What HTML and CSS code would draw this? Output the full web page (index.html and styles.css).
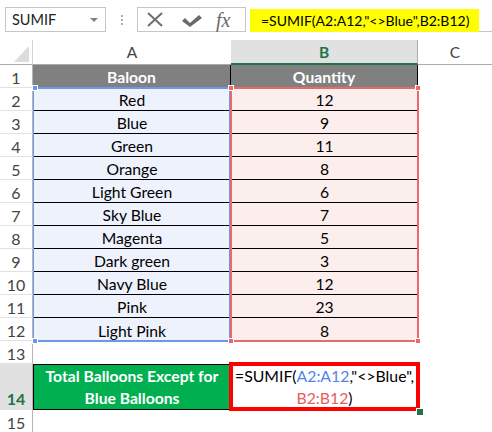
FILE: index.html
```html
<!DOCTYPE html>
<html>
<head>
<meta charset="utf-8">
<link rel="stylesheet" href="styles.css">
</head>
<body>
<div class="toolbar">
  <div class="namebox"><span>SUMIF</span><span class="caret"></span></div>
  <div class="grip"><i></i><i></i><i></i></div>
  <div class="fbtns">
    <svg class="ic-x" width="18" height="15" viewBox="0 0 18 15"><path d="M2 1 L16 14 M16 1 L2 14" stroke="#6f6f6f" stroke-width="2" fill="none"/></svg>
    <svg class="ic-check" width="22" height="14" viewBox="0 0 22 14"><polygon points="1,7 4,4 9,9 18,1 21,4 9,13" fill="#6a6a6a"/></svg>
    <span class="fx">fx</span>
  </div>
  <div class="fbar"><span class="formula">=SUMIF(A2:A12,"&lt;&gt;Blue",B2:B12)</span></div>
</div>
<div class="sheet">
  <div class="corner"><span class="tri"></span></div><div class="ch">A</div><div class="ch sel">B</div><div class="ch last">C</div>

  <div class="rh">1</div><div class="c hd">Baloon</div><div class="c hd">Quantity</div><div class="c"></div>
  <div class="rh">2</div><div class="c a">Red</div><div class="c b">12</div><div class="c"></div>
  <div class="rh">3</div><div class="c a">Blue</div><div class="c b">9</div><div class="c"></div>
  <div class="rh">4</div><div class="c a">Green</div><div class="c b">11</div><div class="c"></div>
  <div class="rh">5</div><div class="c a">Orange</div><div class="c b">8</div><div class="c"></div>
  <div class="rh">6</div><div class="c a">Light Green</div><div class="c b">6</div><div class="c"></div>
  <div class="rh">7</div><div class="c a">Sky Blue</div><div class="c b">7</div><div class="c"></div>
  <div class="rh">8</div><div class="c a">Magenta</div><div class="c b">5</div><div class="c"></div>
  <div class="rh">9</div><div class="c a">Dark green</div><div class="c b">3</div><div class="c"></div>
  <div class="rh">10</div><div class="c a">Navy Blue</div><div class="c b">12</div><div class="c"></div>
  <div class="rh">11</div><div class="c a">Pink</div><div class="c b">23</div><div class="c"></div>
  <div class="rh">12</div><div class="c a end">Light Pink</div><div class="c b end">8</div><div class="c"></div>
  <div class="rh">13</div><div class="c"></div><div class="c"></div><div class="c"></div>
  <div class="rh sel">14</div><div class="c total"><span>Total Balloons Except for</span><span>Blue Balloons</span></div><div class="c result"><span>=SUMIF(<b class="ra">A2:A12</b>,"&lt;&gt;Blue",</span><span><b class="rb">B2:B12</b>)</span></div><div class="c"></div>
  <div class="rh">15</div><div class="c"></div><div class="c"></div><div class="c"></div>

  <div class="range range-a"></div>
  <div class="range range-b"></div>
  <div class="hdl blue h-a-tl"></div>
  <div class="hdl blue h-a-bl"></div>
  <div class="hdl red h-b-tl"></div>
  <div class="hdl red h-b-tr"></div>
  <div class="hdl red h-b-bl"></div>
  <div class="hdl red h-b-br"></div>
  <div class="fill-handle"></div>
</div>
</body>
</html>
```
FILE: styles.css
```css
body {
  margin: 0;
  background: #fff;
  font-family: Lato, "Liberation Sans", sans-serif;
  overflow: hidden;
}
.toolbar {
  height: 40px;
  box-sizing: border-box;
  padding-top: 7px;
  display: flex;
  align-items: flex-start;
}
.namebox {
  margin-left: 5px;
  width: 101px;
  height: 25px;
  box-sizing: border-box;
  border: 1px solid #c6c6c6;
  display: flex;
  align-items: center;
  justify-content: space-between;
  padding: 0 7px 0 6px;
  font-size: 14.5px;
  color: #222;
}
.caret {
  width: 0;
  height: 0;
  border-left: 4px solid transparent;
  border-right: 4px solid transparent;
  border-top: 4px solid #808080;
}
.grip {
  margin-left: 15px;
  height: 25px;
  box-sizing: border-box;
  padding-top: 8px;
  display: flex;
  flex-direction: column;
  gap: 2px;
}
.grip i {
  display: block;
  width: 2px;
  height: 2px;
  background: #b0b0b0;
}
.fbtns {
  margin-left: 14px;
  width: 109px;
  height: 25px;
  box-sizing: border-box;
  border: 1px solid #c6c6c6;
  display: flex;
  align-items: center;
}
.ic-x { margin-left: 8px; }
.ic-check { margin-left: 17px; margin-top: 2px; }
.fx {
  margin-left: 13px;
  font-family: "Liberation Serif", serif;
  font-style: italic;
  font-size: 20px;
  color: #6a6a6a;
  line-height: 20px;
}
.fbar {
  margin-left: 4px;
  flex: 1;
  height: 25px;
  box-sizing: border-box;
  border-bottom: 1px solid #c6c6c6;
  padding-top: 2px;
}
.formula {
  display: inline-block;
  height: 23px;
  box-sizing: border-box;
  background: #ffff00;
  padding: 0 10px 0 11px;
  font-size: 14px;
  line-height: 23px;
  color: #000;
  white-space: nowrap;
}
.sheet {
  position: relative;
  display: grid;
  grid-template-columns: 33px 198px 187px 1fr;
  grid-template-rows: 25px repeat(13, 23px) 46px 23px;
}
.corner {
  position: relative;
  border-right: 1px solid #d4d4d4;
  border-bottom: 1px solid #ababab;
}
.tri {
  position: absolute;
  right: 3px;
  bottom: 2px;
  width: 0;
  height: 0;
  border-left: 15px solid transparent;
  border-bottom: 16px solid #dcdcdc;
}
.ch {
  display: flex;
  align-items: center;
  justify-content: center;
  font-size: 15.5px;
  color: #444;
  border-bottom: 1px solid #ababab;
}
.ch.sel {
  background: #e1e1e1;
  color: #217346;
  font-weight: bold;
  border-bottom: 2px solid #217346;
  border-right: 1px solid #ababab;
}
.rh {
  display: flex;
  align-items: center;
  justify-content: center;
  padding-top: 2px;
  box-sizing: border-box;
  font-size: 16px;
  color: #444;
  border-right: 1px solid #b5b5b5;
  border-bottom: 1px solid #e1e1e1;
}
.rh.sel {
  background: #e1e1e1;
  color: #217346;
  font-weight: bold;
  align-items: flex-end;
  padding-bottom: 1px;
}
.c {
  display: flex;
  align-items: center;
  justify-content: center;
  padding-top: 2px;
  box-sizing: border-box;
  font-size: 15.7px;
  color: #000;
  white-space: nowrap;
}
.hd {
  background: #808080;
  color: #fff;
  font-weight: bold;
  border-right: 1px solid #000;
  border-bottom: 1px solid #000;
}
.a {
  background: #eef2fc;
  border-bottom: 1px solid #000;
}
.b {
  background: #fdeeee;
  border-bottom: 1px solid #000;
}
.a.end, .b.end { border-bottom: none; }
.total {
  flex-direction: column;
  background: #00b050;
  color: #fff;
  font-weight: bold;
  border: 1px solid #000;
  line-height: 22px;
  padding-top: 0;
}
.result {
  flex-direction: column;
  border: 4px solid #ff0000;
  margin: -2px -2px -1px -2px;
  line-height: 22px;
  padding-top: 0;
  font-size: 15.8px;
}
.result b { font-weight: normal; }
.ra { color: #4f86e8; }
.rb { color: #e85c5c; }
.range {
  position: absolute;
  box-sizing: border-box;
  pointer-events: none;
}
.range-a {
  left: 33px;
  top: 47px;
  width: 198px;
  height: 255px;
  border: 2px solid #6a99e8;
  border-left-width: 1px;
}
.range-b {
  left: 230px;
  top: 47px;
  width: 189px;
  height: 255px;
  border: 2px solid #e86a6a;
}
.hdl {
  position: absolute;
  width: 6px;
  height: 6px;
  box-sizing: border-box;
  border: 1px solid #fff;
}
.hdl.blue { background: #6a99e8; }
.hdl.red { background: #e86a6a; }
.h-a-tl { left: 32px; top: 45px; }
.h-a-bl { left: 32px; top: 298px; }
.h-b-tl { left: 228px; top: 45px; }
.h-b-tr { left: 415px; top: 45px; }
.h-b-bl { left: 228px; top: 298px; }
.h-b-br { left: 415px; top: 298px; }
.fill-handle {
  position: absolute;
  left: 416px;
  top: 368px;
  width: 6px;
  height: 6px;
  background: #217346;
  border-left: 1px solid #fff;
  border-top: 1px solid #fff;
}
```
